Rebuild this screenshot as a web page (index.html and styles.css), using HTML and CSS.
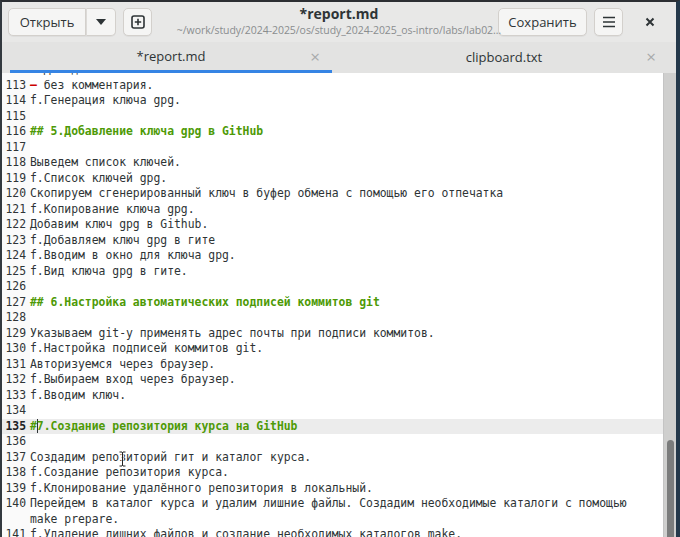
FILE: index.html
```html
<!DOCTYPE html>
<html lang="ru">
<head>
<meta charset="utf-8">
<title>report.md</title>
<link rel="stylesheet" href="styles.css">
</head>
<body>
<div class="window">
  <header class="headerbar">
    <div class="left">
      <div class="split">
        <button class="btn open">Открыть</button>
        <button class="btn drop"><svg width="12" height="8" viewBox="0 0 12 8"><path d="M1 1h10L6 7z" fill="#2e3436"/></svg></button>
      </div>
      <button class="btn icon"><svg width="14" height="14" viewBox="0 0 14 14"><rect x="1" y="1" width="12" height="12" rx="2" fill="none" stroke="#2e3436" stroke-width="1.6"/><path d="M7 3.8v6.4M3.8 7h6.4" stroke="#2e3436" stroke-width="1.6"/></svg></button>
    </div>
    <div class="title">
      <div class="name">*report.md</div>
      <div class="path">~/work/study/2024-2025/os/study_2024-2025_os-intro/labs/lab02…</div>
    </div>
    <div class="right">
      <button class="btn save">Сохранить</button>
      <button class="btn icon"><svg width="14" height="12" viewBox="0 0 14 12"><path d="M1 1.5h12M1 6h12M1 10.5h12" stroke="#2e3436" stroke-width="1.6"/></svg></button>
      <button class="close"><svg width="10" height="10" viewBox="0 0 10 10"><path d="M1.5 1.5l7 7M8.5 1.5l-7 7" stroke="#2e3436" stroke-width="2"/></svg></button>
    </div>
  </header>
  <nav class="tabs">
    <div class="tab active"><span class="tlabel">*report.md</span><span class="tclose">×</span></div>
    <div class="tab"><span class="tlabel">clipboard.txt</span><span class="tclose">×</span></div>
  </nav>
  <main class="editor">
    <div class="view">
      <div class="lines">
        <div class="row"><span class="num">112</span><span class="txt">- Дважды нажимаем Enter</span></div>
        <div class="row"><span class="num">113</span><span class="txt"><span class="red">–</span> без комментария.</span></div>
        <div class="row"><span class="num">114</span><span class="txt">f.Генерация ключа gpg.</span></div>
        <div class="row"><span class="num">115</span><span class="txt"></span></div>
        <div class="row"><span class="num">116</span><span class="txt h">## 5.Добавление ключа gpg в GitHub</span></div>
        <div class="row"><span class="num">117</span><span class="txt"></span></div>
        <div class="row"><span class="num">118</span><span class="txt">Выведем список ключей.</span></div>
        <div class="row"><span class="num">119</span><span class="txt">f.Список ключей gpg.</span></div>
        <div class="row"><span class="num">120</span><span class="txt">Скопируем сгенерированный ключ в буфер обмена с помощью его отпечатка</span></div>
        <div class="row"><span class="num">121</span><span class="txt">f.Копирование ключа gpg.</span></div>
        <div class="row"><span class="num">122</span><span class="txt">Добавим ключ gpg в Github.</span></div>
        <div class="row"><span class="num">123</span><span class="txt">f.Добавляем ключ gpg в гите</span></div>
        <div class="row"><span class="num">124</span><span class="txt">f.Вводим в окно для ключа gpg.</span></div>
        <div class="row"><span class="num">125</span><span class="txt">f.Вид ключа gpg в гите.</span></div>
        <div class="row"><span class="num">126</span><span class="txt"></span></div>
        <div class="row"><span class="num">127</span><span class="txt h">## 6.Настройка автоматических подписей коммитов git</span></div>
        <div class="row"><span class="num">128</span><span class="txt"></span></div>
        <div class="row"><span class="num">129</span><span class="txt">Указываем git-у применять адрес почты при подписи коммитов.</span></div>
        <div class="row"><span class="num">130</span><span class="txt">f.Настройка подписей коммитов git.</span></div>
        <div class="row"><span class="num">131</span><span class="txt">Авторизуемся через браузер.</span></div>
        <div class="row"><span class="num">132</span><span class="txt">f.Выбираем вход через браузер.</span></div>
        <div class="row"><span class="num">133</span><span class="txt">f.Вводим ключ.</span></div>
        <div class="row"><span class="num">134</span><span class="txt"></span></div>
        <div class="row current"><span class="num">135</span><span class="txt h">#<span class="caret"></span>7.Создание репозитория курса на GitHub</span></div>
        <div class="row"><span class="num">136</span><span class="txt"></span></div>
        <div class="row"><span class="num">137</span><span class="txt">Создадим репозиторий гит и каталог курса.<span class="ibeam"><svg width="7" height="16" viewBox="0 0 7 16"><path d="M0.5 1h2.5l0.5 0.8 0.5-0.8h2.5M3.5 1.5v13M0.5 15h2.5l0.5-0.8 0.5 0.8h2.5" fill="none" stroke="#fff" stroke-width="2.2"/><path d="M0.5 1h2.5l0.5 0.8 0.5-0.8h2.5M3.5 1.5v13M0.5 15h2.5l0.5-0.8 0.5 0.8h2.5" fill="none" stroke="#222" stroke-width="1"/></svg></span></span></div>
        <div class="row"><span class="num">138</span><span class="txt">f.Создание репозитория курса.</span></div>
        <div class="row"><span class="num">139</span><span class="txt">f.Клонирование удалённого репозитория в локальный.</span></div>
        <div class="row"><span class="num">140</span><span class="txt">Перейдем в каталог курса и удалим лишние файлы. Создадим необходимые каталоги с помощью make prepare.</span></div>
        <div class="row"><span class="num">141</span><span class="txt">f.Удаление лишних файлов и создание необходимых каталогов make.</span></div>
        <div class="row"><span class="num">142</span><span class="txt"></span></div>
      </div>
    </div>
    <div class="scrollbar"><div class="thumb"></div></div>
  </main>
</div>
</body>
</html>
```

FILE: styles.css
```css
html, body {
  margin: 0;
  padding: 0;
  width: 680px;
  height: 537px;
  overflow: hidden;
  background: #1f2b36;
}

.window {
  box-sizing: border-box;
  width: 680px;
  height: 537px;
  display: flex;
  flex-direction: column;
  border-top: 2px solid #2c2f33;
  border-left: 2px solid #33393f;
  border-right: 4px solid #24384a;
  background: #e8e8e7;
  font-family: "Open Sans", "Noto Sans", sans-serif;
  color: #2e3436;
  overflow: hidden;
}

.headerbar {
  height: 40px;
  flex: none;
  display: flex;
  align-items: center;
  justify-content: space-between;
  padding: 0 6px;
  background: #e8e8e7;
  position: relative;
}

.left, .right {
  display: flex;
  align-items: center;
  gap: 7px;
}

.btn {
  height: 28px;
  border: 1px solid #d3d0cc;
  border-radius: 5px;
  background: #f5f5f4;
  font-family: inherit;
  font-size: 13px;
  color: #2e3436;
  display: flex;
  align-items: center;
  justify-content: center;
  padding: 0;
  box-shadow: 0 1px 0 rgba(0,0,0,0.04);
}

.split {
  display: flex;
}
.split .open {
  width: 78px;
  border-radius: 5px 0 0 5px;
}
.split .drop {
  width: 30px;
  border-left: 1px solid #dcdad7;
  border-radius: 0 5px 5px 0;
}

.btn.icon {
  width: 29px;
}

.btn.save {
  width: 89px;
}

.close {
  width: 40px;
  height: 28px;
  border: none;
  background: transparent;
  display: flex;
  align-items: center;
  justify-content: center;
  padding: 0;
}

.title {
  position: absolute;
  left: 0;
  right: 0;
  top: 3px;
  text-align: center;
  pointer-events: none;
}
.title .name {
  font-weight: 700;
  font-size: 14px;
  line-height: 18px;
}
.title .path {
  font-size: 10.5px;
  line-height: 14px;
  color: #8a8d8f;
  letter-spacing: -0.05px;
}

.tabs {
  height: 31px;
  flex: none;
  display: flex;
  padding-left: 8px;
  background: #e3e3e2;
}
.tab {
  flex: 1;
  position: relative;
  display: flex;
  align-items: center;
  justify-content: center;
  font-size: 13px;
  color: #2e3436;
  box-sizing: border-box;
  padding-bottom: 1px;
}
.tab.active {
  flex: none;
  width: 322px;
  border-bottom: 3px solid #3584e4;
  padding-bottom: 0;
}
.tclose {
  position: absolute;
  right: 12px;
  top: 6px;
  font-size: 17px;
  color: #a8aaab;
  line-height: 18px;
}
.tab:not(.active) .tclose {
  right: 20px;
}

.editor {
  flex: 1;
  display: flex;
  min-height: 0;
  background: #ffffff;
}

.view {
  flex: 1;
  overflow: hidden;
  min-width: 0;
}

.lines {
  margin-top: -11px;
  font-family: "DejaVu Sans Mono", monospace;
  font-size: 11.4px;
  line-height: 15.5px;
  color: #2e3436;
}

.row {
  display: flex;
}
.row.current {
  background: #ececec;
}

.num {
  flex: none;
  width: 24px;
  padding-right: 4px;
  text-align: right;
  color: #2e3436;
  background: #fafafa;
}
.current .num {
  font-weight: 700;
  color: #1e2224;
  background: #ececec;
}

.txt {
  flex: 1;
  white-space: pre-wrap;
  word-break: normal;
  padding-right: 26px;
  position: relative;
}

.h {
  color: #4e9a06;
  font-weight: 700;
}

.red {
  color: #cc0000;
  font-weight: 700;
}

.caret {
  display: inline-block;
  width: 1px;
  height: 14px;
  vertical-align: -3px;
  background: #2e3436;
  margin-right: -1px;
}

.ibeam {
  position: absolute;
  left: 89px;
  top: 1px;
  line-height: 0;
}

.scrollbar {
  flex: none;
  width: 12px;
  background: #cfcfce;
  border-left: 1px solid #c4c4c4;
  display: flex;
  flex-direction: column;
  justify-content: flex-end;
  align-items: center;
}
.thumb {
  width: 7px;
  height: 97px;
  border-radius: 4px 4px 0 0;
  background: #7b7c7c;
}
```
